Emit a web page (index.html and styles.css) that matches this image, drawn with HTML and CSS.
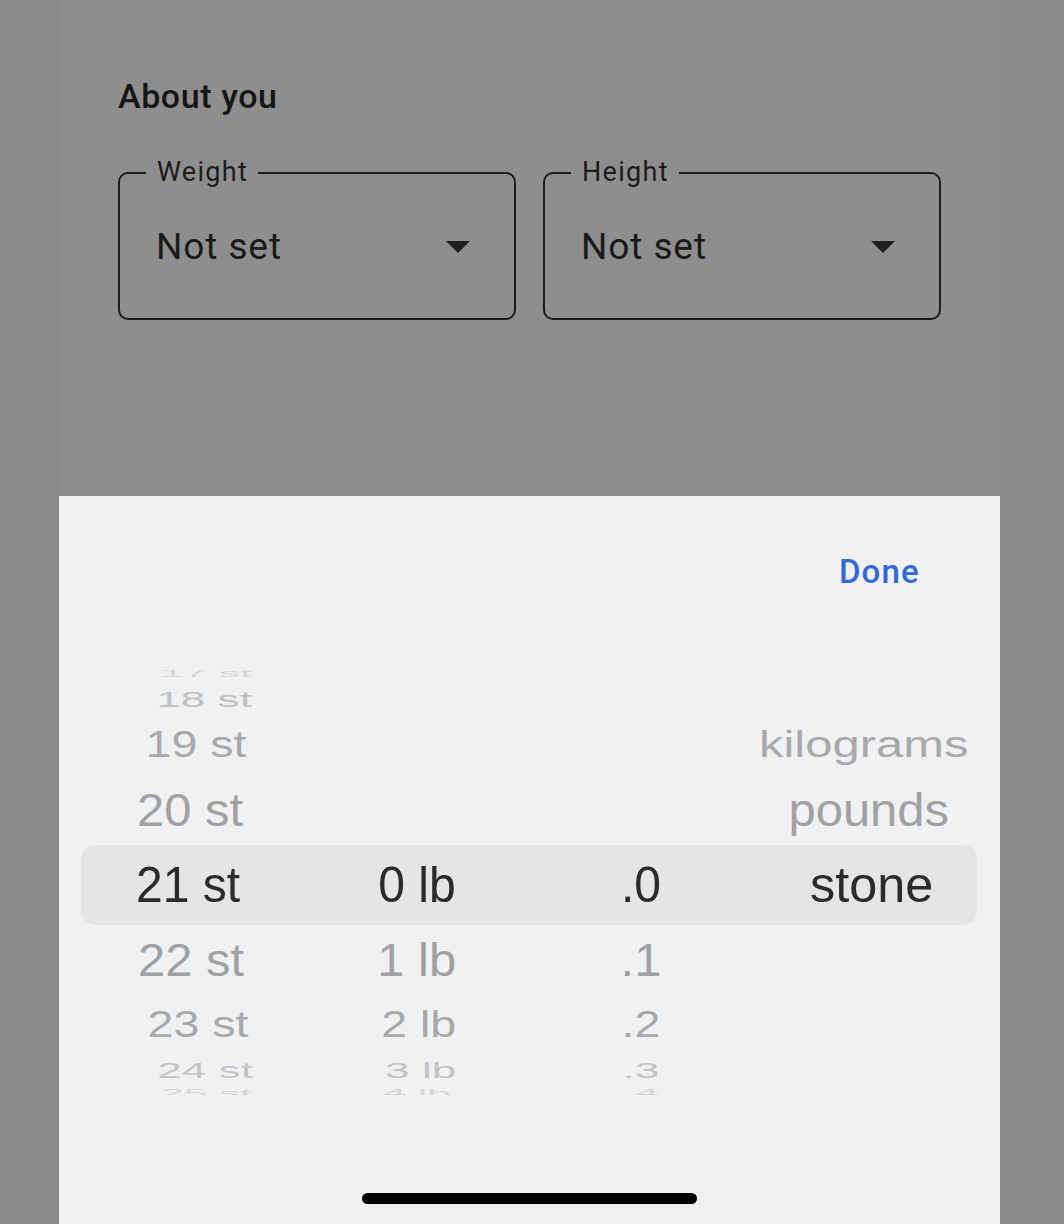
FILE: index.html
```html
<!DOCTYPE html>
<html>
<head>
<meta charset="utf-8">
<link rel="stylesheet" href="styles.css">
</head>
<body>
<div class="column">
  <section class="about">
    <h2 class="title">About you</h2>
    <div class="fields">
      <div class="field">
        <span class="label">Weight</span>
        <span class="value">Not set</span>
        <svg class="arrow" width="24" height="12" viewBox="0 0 24 12"><polygon points="0,0 24,0 12,12" fill="#1f1f1f"/></svg>
      </div>
      <div class="field">
        <span class="label">Height</span>
        <span class="value">Not set</span>
        <svg class="arrow" width="24" height="12" viewBox="0 0 24 12"><polygon points="0,0 24,0 12,12" fill="#1f1f1f"/></svg>
      </div>
    </div>
  </section>

  <section class="sheet">
    <div class="toolbar"><span class="done">Done</span></div>
    <div class="picker">
      <div class="row rm4"><div class="c c1"><span>17 st</span></div><div class="c c2"></div><div class="c c3"></div><div class="c c4"></div></div>
      <div class="row rm3"><div class="c c1"><span>18 st</span></div><div class="c c2"></div><div class="c c3"></div><div class="c c4"></div></div>
      <div class="row rm2"><div class="c c1"><span>19 st</span></div><div class="c c2"></div><div class="c c3"></div><div class="c c4"><span>kilograms</span></div></div>
      <div class="row rm1"><div class="c c1"><span>20 st</span></div><div class="c c2"></div><div class="c c3"></div><div class="c c4"><span>pounds</span></div></div>
      <div class="row r0"><div class="c c1"><span>21 st</span></div><div class="c c2"><span>0 lb</span></div><div class="c c3"><span>.0</span></div><div class="c c4"><span>stone</span></div></div>
      <div class="row rp1"><div class="c c1"><span>22 st</span></div><div class="c c2"><span>1 lb</span></div><div class="c c3"><span>.1</span></div><div class="c c4"></div></div>
      <div class="row rp2"><div class="c c1"><span>23 st</span></div><div class="c c2"><span>2 lb</span></div><div class="c c3"><span>.2</span></div><div class="c c4"></div></div>
      <div class="row rp3"><div class="c c1"><span>24 st</span></div><div class="c c2"><span>3 lb</span></div><div class="c c3"><span>.3</span></div><div class="c c4"></div></div>
      <div class="row rp4"><div class="c c1"><span>25 st</span></div><div class="c c2"><span>4 lb</span></div><div class="c c3"><span>.4</span></div><div class="c c4"></div></div>
    </div>
    <div class="home-indicator"></div>
  </section>
</div>
</body>
</html>
```

FILE: styles.css
```css
html, body {
  margin: 0;
  padding: 0;
}

body {
  background: #8a8a8a;
  font-family: Roboto, "Noto Sans", Arial, sans-serif;
}

.column {
  width: 941px;
  height: 1224px;
  margin-left: 59px;
  background: #8e8e8e;
  display: flex;
  flex-direction: column;
  overflow: hidden;
}

.about {
  padding: 76px 59px 0 59px;
}

.title {
  margin: 0;
  font-size: 34px;
  line-height: 40px;
  font-weight: 500;
  letter-spacing: 0.6px;
  color: #161616;
}

.fields {
  margin-top: 56px;
  display: flex;
  gap: 27px;
}

.field {
  position: relative;
  flex: 1;
  height: 144px;
  border: 2px solid #1c1c1c;
  border-radius: 10px;
  display: flex;
  align-items: center;
  padding: 0 44px 0 36px;
}

.label {
  position: absolute;
  top: -15px;
  left: 26px;
  padding: 0 10px 0 11px;
  background: #8e8e8e;
  font-size: 27px;
  line-height: 27px;
  letter-spacing: 1.3px;
  color: #1c1c1c;
}

.value {
  flex: 1;
  font-size: 37px;
  line-height: 37px;
  letter-spacing: 0.9px;
  color: #1a1a1a;
}

.arrow {
  display: block;
  margin-top: 2px;
}

.sheet {
  margin-top: auto;
  height: 728px;
  background: #f0f1f3;
  display: flex;
  flex-direction: column;
  padding: 0 23px 0 22px;
}

.toolbar {
  margin-top: 57px;
  display: flex;
  justify-content: flex-end;
  padding-right: 57px;
}

.done {
  font-size: 33px;
  line-height: 38px;
  font-weight: 500;
  letter-spacing: 1.2px;
  color: #3268da;
}

.picker {
  margin-top: 79px;
  height: 425px;
  overflow: hidden;
  font-family: "Liberation Sans", Arial, sans-serif;
  font-size: 48px;
}

.row {
  display: grid;
  grid-template-columns: 1fr 1fr 1fr 1fr;
  grid-template-rows: 100%;
}

.c {
  display: flex;
  align-items: center;
  justify-content: center;
  line-height: 1;
  white-space: nowrap;
}

.c1 { padding-right: 6px; }
.c4 { padding-left: 8px; }

.c span {
  display: inline-block;
  transform: translate(var(--dx, 0px), var(--dy, 0px)) scale(var(--sx, 1), var(--sy, 1));
}

.rm4 { height: 13px; color: #d6d6d8; --sx: 0.88; --sy: 0.22; --dy: -4px; }
.rm3 { height: 32px; color: #c0c0c2; --sx: 0.92; --sy: 0.47; }
.rm2 { height: 60px; color: #a9a9ab; --sx: 0.97; --sy: 0.76; }
.rm1 { height: 70px; color: #a1a1a3; --sx: 1.02; --sy: 0.97; }
.r0  { height: 80px; color: #2b2b2d; --sx: 1; --sy: 1.05; background: #e4e5e7; border-radius: 14px; }
.rp1 { height: 70px; color: #a1a1a3; --sx: 1.02; --sy: 0.97; }
.rp2 { height: 60px; color: #a9a9ab; --sx: 0.97; --sy: 0.76; }
.rp3 { height: 30px; color: #c4c4c6; --sx: 0.92; --sy: 0.47; }
.rp4 { height: 10px; color: #d6d6d8; --sx: 0.88; --sy: 0.22; --dy: 3px; }

.rm4 .c1 { --dx: 16px; }
.rm3 .c1 { --dx: 14px; }
.rm2 .c1 { --dx: 6px; }
.r0 .c1 { --dx: -2px; }
.rp1 .c1 { --dx: 1px; }
.rp2 .c1 { --dx: 8px; }
.rp3 .c1 { --dx: 15px; }
.rp4 .c1 { --dx: 16px; }
.rp2 .c2 { --dx: 2px; }
.rp3 .c2 { --dx: 4px; }
.rm2 .c4 { --dx: -5px; --sx: 1.02; }
.r0 .c4 { --dx: 3px; --sx: 1.05; }

.home-indicator {
  margin: auto auto 20px auto;
  width: 335px;
  height: 11px;
  border-radius: 6px;
  background: #000;
}
```
